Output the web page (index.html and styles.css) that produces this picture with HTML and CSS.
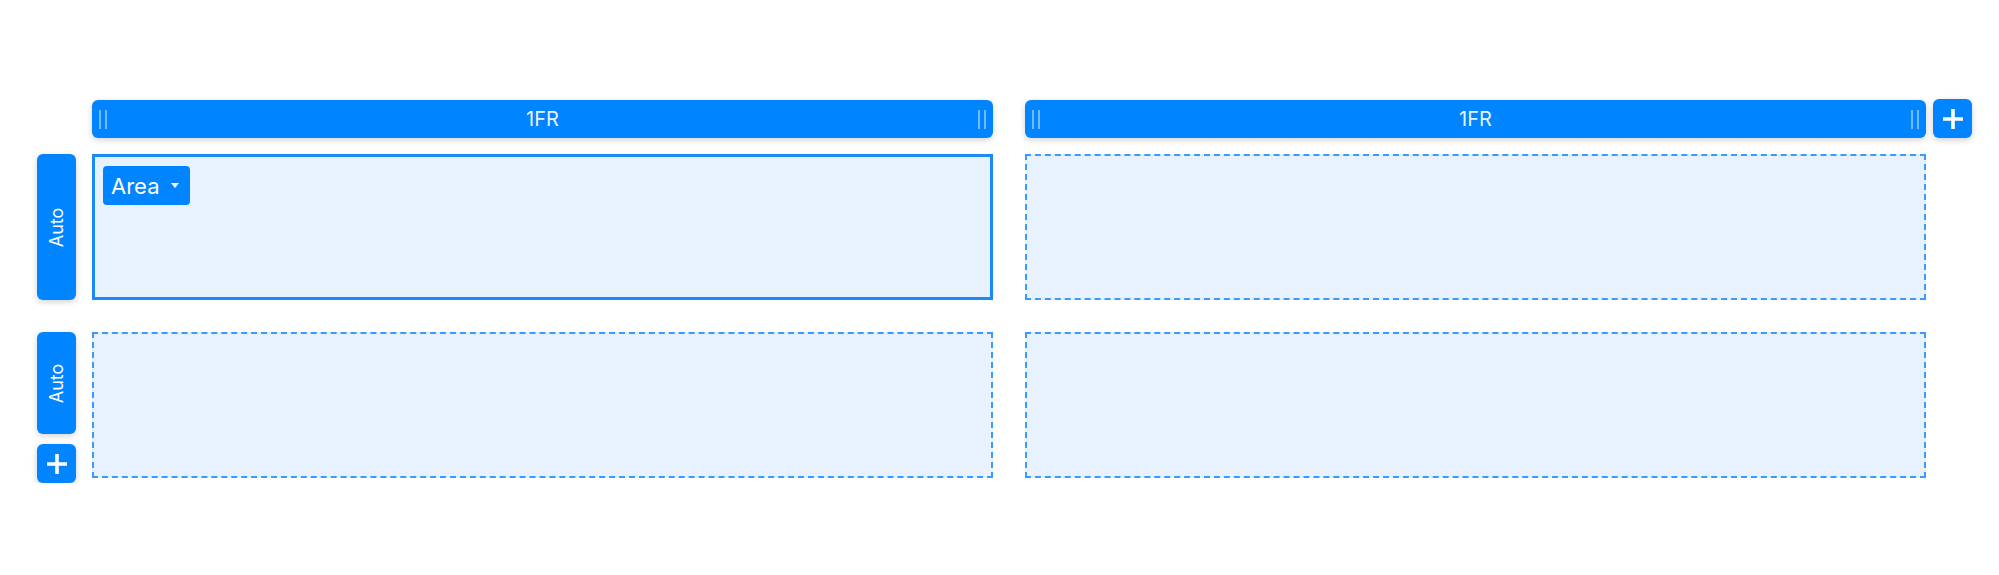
FILE: index.html
```html
<!DOCTYPE html>
<html lang="en">
<head>
    <meta charset="UTF-8">
    <meta name="viewport" content="width=device-width, initial-scale=1.0">
    <title>Grid Editor</title>
    <link rel="stylesheet" href="styles.css">
</head>
<body>
    <div class="board">
        <!-- column tracks -->
        <div class="col-bar">
            <div class="col-tracks">
                <div class="col-track">
                    <span class="handle"></span>
                    <span class="track-size">1FR</span>
                    <span class="handle"></span>
                </div>
                <div class="col-track">
                    <span class="handle"></span>
                    <span class="track-size">1FR</span>
                    <span class="handle"></span>
                </div>
            </div>
            <button class="add-btn add-col" title="Add column">
                <svg width="22" height="22" viewBox="0 0 22 22"><path d="M11 1v20M1 11h20" stroke="#fff" stroke-width="3.6" fill="none"/></svg>
            </button>
        </div>

        <!-- rows -->
        <div class="grid-row">
            <div class="row-side">
                <div class="row-track row-track-full"><span>Auto</span></div>
            </div>
            <div class="cells">
                <div class="cell cell-active">
                    <button class="area-btn">Area <span class="caret"></span></button>
                </div>
                <div class="cell"></div>
            </div>
        </div>

        <div class="grid-row">
            <div class="row-side">
                <div class="row-track row-track-short"><span>Auto</span></div>
                <button class="add-btn add-row" title="Add row">
                    <svg width="22" height="22" viewBox="0 0 22 22"><path d="M11 1v20M1 11h20" stroke="#fff" stroke-width="3.6" fill="none"/></svg>
                </button>
            </div>
            <div class="cells">
                <div class="cell"></div>
                <div class="cell"></div>
            </div>
        </div>
    </div>
</body>
</html>
```

FILE: styles.css
```css
body {
    margin: 0;
    background: #fff;
    font-family: Inter, 'Noto Sans', sans-serif;
}

.board {
    width: 1935px;
    padding: 100px 0 0 37px;
}

.col-bar {
    display: flex;
    align-items: flex-start;
    margin-left: 55px;
}

.col-tracks {
    flex: 1;
    display: grid;
    grid-template-columns: 1fr 1fr;
    gap: 32px;
}

.col-track {
    height: 38px;
    display: flex;
    align-items: center;
    justify-content: space-between;
    padding: 0 7px;
    box-sizing: border-box;
    background-color: #0084ff;
    border-radius: 6px;
    box-shadow: 0 2px 6px rgba(0, 0, 0, 0.18);
    color: #fff;
}

.track-size {
    font-size: 20px;
    color: rgba(255, 255, 255, 0.92);
}

.handle {
    width: 4px;
    height: 19px;
    border-left: 2px solid rgba(255, 255, 255, 0.45);
    border-right: 2px solid rgba(255, 255, 255, 0.45);
}

.add-btn {
    width: 39px;
    height: 39px;
    padding: 0;
    border: none;
    border-radius: 6px;
    background-color: #0084ff;
    box-shadow: 0 2px 6px rgba(0, 0, 0, 0.2);
    display: flex;
    align-items: center;
    justify-content: center;
    cursor: pointer;
}

.add-col {
    margin-left: 7px;
    margin-top: -1px;
}

.grid-row {
    display: flex;
    align-items: flex-start;
    gap: 16px;
    margin-top: 16px;
}

.grid-row + .grid-row {
    margin-top: 32px;
}

.row-side {
    width: 39px;
    display: flex;
    flex-direction: column;
    gap: 10px;
}

.row-track {
    background-color: #0084ff;
    border-radius: 6px;
    box-shadow: 0 2px 6px rgba(0, 0, 0, 0.18);
    display: flex;
    align-items: center;
    justify-content: center;
    color: #fff;
    font-size: 18px;
}

.row-track span {
    transform: rotate(-90deg);
    white-space: nowrap;
}

.row-track-full {
    height: 146px;
}

.row-track-short {
    height: 102px;
}

.cells {
    flex: 1;
    display: grid;
    grid-template-columns: 1fr 1fr;
    gap: 32px;
    margin-right: 46px;
}

.cell {
    height: 146px;
    box-sizing: border-box;
    background-color: #e8f2fe;
    border: 2px dashed #3a9aff;
}

.cell-active {
    border: 3px solid #1a8af8;
    padding: 9px 8px;
}

.area-btn {
    display: flex;
    align-items: center;
    gap: 11px;
    height: 39px;
    padding: 0 11px 0 8px;
    border: none;
    border-radius: 4px;
    background-color: #0084ff;
    color: #fff;
    font-family: Inter, 'Noto Sans', sans-serif;
    font-size: 22px;
    cursor: pointer;
}

.caret {
    width: 0;
    height: 0;
    border-left: 4px solid transparent;
    border-right: 4px solid transparent;
    border-top: 5px solid #fff;
}
```
